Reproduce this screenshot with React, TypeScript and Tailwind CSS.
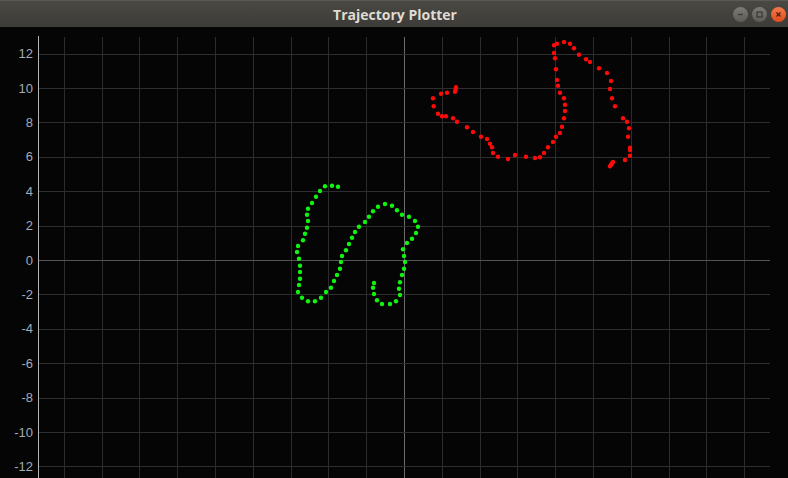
import React from "react";

const GREEN: [number, number][] = [
  [338, 186.7], [332, 185.7], [325, 186.3], [320, 191], [316, 196.7], [312, 203], [308, 208.7],
  [307, 214.7], [308, 221], [307, 227.7], [305, 233.7], [303, 240.3], [298, 246], [297, 252],
  [299, 258.7], [300, 265.7], [300, 272], [300, 278.7], [299, 285], [298, 292], [302, 297.7],
  [308, 301.3], [315, 301.3], [321, 297.7], [326, 292], [331, 287.7], [334, 281], [337, 275],
  [340, 268.7], [341, 262], [342, 256], [346, 250.3], [349, 244], [352, 237.7], [355, 232],
  [359, 226.7], [365, 222], [369, 216.7], [373, 211.3], [378, 206.7], [385, 204], [392, 205.7],
  [397, 210.3], [402, 214.7], [409, 216.7], [415, 221], [418, 226.7], [416, 233], [412, 238.7],
  [407, 243], [403, 249.3], [404, 256], [405, 262], [404, 268.7], [402, 275], [400, 282.3],
  [399, 288.7], [400, 295], [396, 301.3], [390, 304], [382, 304], [377, 300.3], [374, 294],
  [373, 287.7], [374, 283],
];

const RED: [number, number][] = [
  [456, 87.3], [455.7, 89.3], [455, 91.7], [447, 92.7], [441, 93.7], [433, 98.3], [433.7, 106.3],
  [438, 113.7], [442, 116.3], [446, 116.3], [453, 118.3], [457, 121.7], [467, 127.3], [473, 132],
  [481, 136.7], [487, 139], [490, 143.7], [492, 147.3], [493, 153], [498, 156.7], [508, 159],
  [515, 155], [526, 156.7], [535, 158], [540, 157.3], [544, 153], [548, 147.3], [553, 142],
  [556, 136.7], [560, 133], [562, 126.7], [564, 118.3], [565, 111], [565, 104.7], [564, 98.3],
  [560, 92.7], [558, 85.7], [557, 80], [556, 69.3], [555, 58.3], [554, 53], [554, 45.3],
  [557, 43.7], [564, 42], [570, 43.7], [574, 48.3], [579, 54.7], [586, 59.3], [590, 62],
  [599, 68.3], [607, 73], [611, 81], [610, 89], [612, 98.3], [615, 106.3], [623, 118.3],
  [627, 121.7], [629, 128.3], [628, 136.7], [630, 147.7], [630, 150], [630, 155.7], [625, 160],
  [613, 162], [612, 163.5], [611, 164.7], [610, 166.3],
];

const xLines = Array.from({ length: 19 }, (_, i) => 404 + (i - 9) * 37.8);
const yTicks = Array.from({ length: 13 }, (_, i) => 12 - i * 2);
const yPos = (v: number) => 260 - v * 17.2;

function TitleButton({ kind }: { kind: "min" | "max" | "close" }) {
  const close = kind === "close";
  return (
    <div
      className={
        close
          ? "flex h-[15px] w-[15px] items-center justify-center rounded-full bg-gradient-to-b from-[#f47a4a] to-[#df4a16]"
          : "flex h-[15px] w-[15px] items-center justify-center rounded-full bg-gradient-to-b from-[#7c7b76] to-[#5c5b56]"
      }
    >
      <svg width="9" height="9" viewBox="0 0 9 9">
        {kind === "min" && <line x1="2" y1="4.5" x2="7" y2="4.5" stroke="#3a3935" strokeWidth="1.3" />}
        {kind === "max" && <rect x="2" y="2" width="5" height="5" fill="none" stroke="#3a3935" strokeWidth="1.2" />}
        {close && (
          <g stroke="#4a2010" strokeWidth="1.3">
            <line x1="2.5" y1="2.5" x2="6.5" y2="6.5" />
            <line x1="6.5" y1="2.5" x2="2.5" y2="6.5" />
          </g>
        )}
      </svg>
    </div>
  );
}

export default function App() {
  return (
    <div className="flex h-[478px] w-[788px] flex-col overflow-hidden bg-[#050505] font-['Liberation_Sans',sans-serif]">
      <header className="relative flex h-[27px] shrink-0 items-center justify-center border-t border-[#5a5954] bg-gradient-to-b from-[#494843] to-[#3c3b37]">
        <span className="pl-[2px] font-['Open_Sans',sans-serif] text-[14px] font-bold text-[#dfdbd2]">Trajectory Plotter</span>
        <div className="absolute right-[2px] top-[6px] flex gap-[4px]">
          <TitleButton kind="min" />
          <TitleButton kind="max" />
          <TitleButton kind="close" />
        </div>
      </header>

      <svg width="788" height="451" viewBox="0 27 788 451" className="block shrink-0">
        {xLines.map((x) => (
          <line
            key={`v${x}`}
            x1={Math.round(x) + 0.5}
            y1={37}
            x2={Math.round(x) + 0.5}
            y2={478}
            stroke={Math.round(x) === 404 ? "#6b6b6b" : "#2c2c2c"}
            strokeWidth="1"
          />
        ))}
        {yTicks.map((v) => (
          <line
            key={`h${v}`}
            x1={39}
            y1={Math.round(yPos(v)) + 0.5}
            x2={770}
            y2={Math.round(yPos(v)) + 0.5}
            stroke={v === 0 ? "#555555" : "#2e2e2e"}
            strokeWidth="1"
          />
        ))}
        <line x1={38.5} y1={36} x2={38.5} y2={478} stroke="#b4b4b4" strokeWidth="1" />
        {yTicks.map((v) => (
          <text
            key={`t${v}`}
            x={33}
            y={yPos(v) + 4.5}
            textAnchor="end"
            fill="#a3abb5"
            fontSize="13"
            fontFamily="Liberation Sans, sans-serif"
          >
            {v}
          </text>
        ))}
        {GREEN.map(([x, y], i) => (
          <circle key={`g${i}`} cx={x} cy={y} r={2.2} fill="#10f510" />
        ))}
        {RED.map(([x, y], i) => (
          <circle key={`r${i}`} cx={x} cy={y} r={2.2} fill="#ff0a0a" />
        ))}
      </svg>
    </div>
  );
}
